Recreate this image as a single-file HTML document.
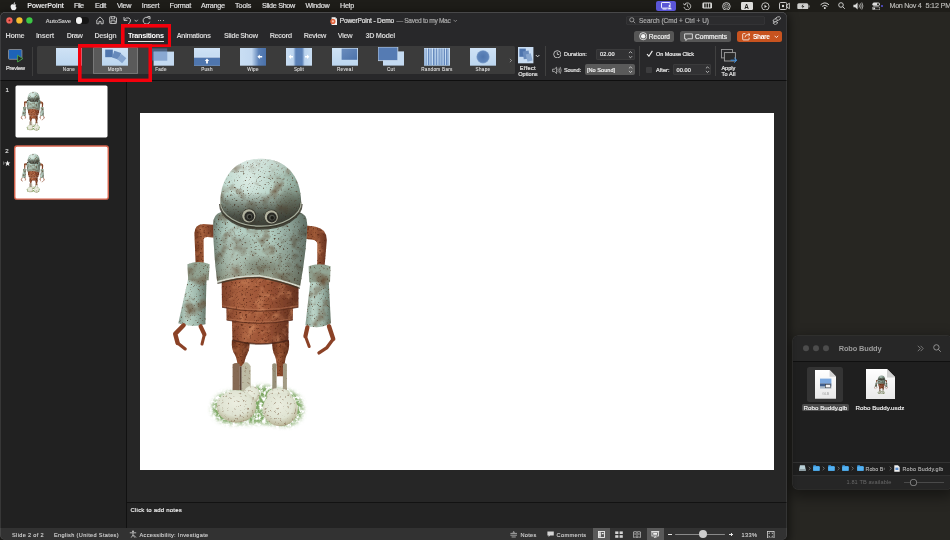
<!DOCTYPE html>
<html lang="en"><head><meta charset="utf-8"><title>PowerPoint - Demo</title>
<style>
html,body{margin:0;padding:0}
body{width:950px;height:540px;overflow:hidden;position:relative;background:#272622;font-family:"Liberation Sans",sans-serif;}
#root{position:absolute;left:0;top:0;width:950px;height:540px;will-change:transform;overflow:hidden}
.a{position:absolute;display:block}
.t{position:absolute;white-space:nowrap;display:block}
</style></head><body><div id="root">
<div class="a" style="left:0.00px;top:0.00px;width:950.00px;height:12.00px;background:#1e1d19;"></div>
<span class="t" style="left:27.30px;top:1.22px;font-size:7.2px;line-height:9.36px;letter-spacing:-0.320px;font-weight:700;color:#e6e6e6;">PowerPoint</span>
<span class="t" style="left:74.00px;top:1.22px;font-size:7.2px;line-height:9.36px;letter-spacing:-0.500px;font-weight:400;color:#e6e6e6;-webkit-text-stroke:0.18px #e6e6e6;">File</span>
<span class="t" style="left:95.00px;top:1.22px;font-size:7.2px;line-height:9.36px;letter-spacing:-0.352px;font-weight:400;color:#e6e6e6;-webkit-text-stroke:0.18px #e6e6e6;">Edit</span>
<span class="t" style="left:117.00px;top:1.22px;font-size:7.2px;line-height:9.36px;letter-spacing:-0.369px;font-weight:400;color:#e6e6e6;-webkit-text-stroke:0.18px #e6e6e6;">View</span>
<span class="t" style="left:141.70px;top:1.22px;font-size:7.2px;line-height:9.36px;letter-spacing:-0.051px;font-weight:400;color:#e6e6e6;-webkit-text-stroke:0.18px #e6e6e6;">Insert</span>
<span class="t" style="left:169.50px;top:1.22px;font-size:7.2px;line-height:9.36px;letter-spacing:-0.217px;font-weight:400;color:#e6e6e6;-webkit-text-stroke:0.18px #e6e6e6;">Format</span>
<span class="t" style="left:200.90px;top:1.22px;font-size:7.2px;line-height:9.36px;letter-spacing:-0.231px;font-weight:400;color:#e6e6e6;-webkit-text-stroke:0.18px #e6e6e6;">Arrange</span>
<span class="t" style="left:235.00px;top:1.22px;font-size:7.2px;line-height:9.36px;letter-spacing:-0.082px;font-weight:400;color:#e6e6e6;-webkit-text-stroke:0.18px #e6e6e6;">Tools</span>
<span class="t" style="left:262.00px;top:1.22px;font-size:7.2px;line-height:9.36px;letter-spacing:-0.302px;font-weight:400;color:#e6e6e6;-webkit-text-stroke:0.18px #e6e6e6;">Slide Show</span>
<span class="t" style="left:305.40px;top:1.22px;font-size:7.2px;line-height:9.36px;letter-spacing:-0.268px;font-weight:400;color:#e6e6e6;-webkit-text-stroke:0.18px #e6e6e6;">Window</span>
<span class="t" style="left:340.00px;top:1.22px;font-size:7.2px;line-height:9.36px;letter-spacing:-0.202px;font-weight:400;color:#e6e6e6;-webkit-text-stroke:0.18px #e6e6e6;">Help</span>
<span class="t" style="left:889.50px;top:1.22px;font-size:7.2px;line-height:9.36px;letter-spacing:-0.313px;font-weight:400;color:#b9b9b6;-webkit-text-stroke:0.18px #b9b9b6;">Mon Nov 4</span>
<span class="t" style="left:925.50px;top:1.22px;font-size:7.2px;line-height:9.36px;letter-spacing:-0.188px;font-weight:400;color:#b9b9b6;-webkit-text-stroke:0.18px #b9b9b6;">5:12 PM</span>
<div class="a" style="left:793.3px;top:335.6px;width:158.4px;height:153.6px;background:#1f1f1f;border-radius:5px;box-shadow:0 0 0 .6px #3e3e3e,0 5px 14px 3px rgba(0,0,0,.42);overflow:hidden">
<div class="a" style="left:0.00px;top:0.00px;width:160.00px;height:25.20px;background:#272727;"></div>
<div class="a" style="left:0.00px;top:25.20px;width:160.00px;height:0.60px;background:#101010;"></div>
<div class="a" style="left:0.00px;top:126.00px;width:160.00px;height:0.60px;background:#333;"></div>
<div class="a" style="left:0.00px;top:139.60px;width:160.00px;height:14.40px;background:#262626;"></div>
<div class="a" style="left:0.00px;top:139.60px;width:160.00px;height:0.60px;background:#303030;"></div>
</div>
<div class="a" id="ppt" style="left:0;top:12px;width:787px;height:528px;background:#262626;border-radius:5px 5px 5px 5px;box-shadow:0 3px 10px 2px rgba(0,0,0,.55);overflow:hidden">
<div class="a" style="left:0.00px;top:0.00px;width:787.00px;height:67.50px;background:#28282a;"></div>
<div class="a" style="left:0.00px;top:67.50px;width:787.00px;height:1.00px;background:#0f0f0f;"></div>
<div class="a" style="left:0.00px;top:68.50px;width:126.00px;height:447.50px;background:#212121;"></div>
<div class="a" style="left:126.00px;top:68.50px;width:1.00px;height:447.50px;background:#111;"></div>
<div class="a" style="left:127.00px;top:68.50px;width:660.00px;height:421.50px;background:#262626;"></div>
<div class="a" style="left:127.00px;top:489.50px;width:660.00px;height:1.00px;background:#121212;"></div>
<div class="a" style="left:127.00px;top:490.50px;width:660.00px;height:25.50px;background:#232323;"></div>
<div class="a" style="left:0.00px;top:516.00px;width:787.00px;height:12.00px;background:#323232;"></div>
<div class="a" style="left:140.00px;top:101.00px;width:634.00px;height:357.00px;background:#ffffff;"></div>
<div class="a" style="left:0;top:0;width:787px;height:528px;border-radius:5px;box-shadow:inset 0 .8px 0 rgba(255,255,255,.2), inset .8px 0 0 rgba(255,255,255,.13), inset -.8px 0 0 rgba(255,255,255,.1)"></div>
</div>
<svg class="a" style="left:4.00px;top:15.00px;" width="32" height="11" viewBox="0 0 32 11"><circle cx="5.4" cy="5.4" r="3.15" fill="#f0635a"/><circle cx="5.4" cy="5.4" r=".9" fill="#8c1a10"/><circle cx="15.4" cy="5.4" r="3.15" fill="#f6bc30"/><circle cx="25.4" cy="5.4" r="3.15" fill="#3cc845"/></svg>
<span class="t" style="left:45.50px;top:17.50px;font-size:6px;line-height:7.80px;letter-spacing:-0.309px;font-weight:700;color:#c8c8c8;">AutoSave</span>
<div class="a" style="left:75.30px;top:17.20px;width:13.30px;height:6.80px;background:#151515;border-radius:3.4px"></div>
<div class="a" style="left:75.60px;top:17.30px;width:6.60px;height:6.60px;background:#f4f4f4;border-radius:50%"></div>
<span class="t" style="left:339.80px;top:17.01px;font-size:6.6px;line-height:8.58px;letter-spacing:-0.178px;font-weight:400;color:#e0e0e0;-webkit-text-stroke:0.2px #e0e0e0;">PowerPoint - Demo</span>
<span class="t" style="left:396.50px;top:17.01px;font-size:6.6px;line-height:8.58px;letter-spacing:-0.319px;font-weight:400;color:#a8a8a8;-webkit-text-stroke:0.2px #a8a8a8;">— Saved to my Mac</span>
<div class="a" style="left:625.80px;top:15.70px;width:139.20px;height:9.60px;background:#2c2c2e;border-radius:2.5px;box-shadow:inset 0 0 0 0.6px #3a3a3c"></div>
<span class="t" style="left:639.00px;top:17.07px;font-size:6.5px;line-height:8.45px;letter-spacing:-0.003px;font-weight:400;color:#a9a9a9;-webkit-text-stroke:0.2px #a9a9a9;">Search (Cmd + Ctrl + U)</span>
<span class="t" style="left:5.60px;top:30.66px;font-size:7.3px;line-height:9.49px;letter-spacing:-0.470px;font-weight:700;color:#dedede;opacity:.93">Home</span>
<span class="t" style="left:35.90px;top:30.66px;font-size:7.3px;line-height:9.49px;letter-spacing:-0.330px;font-weight:700;color:#dedede;opacity:.93">Insert</span>
<span class="t" style="left:66.70px;top:30.66px;font-size:7.3px;line-height:9.49px;letter-spacing:-0.538px;font-weight:700;color:#dedede;opacity:.93">Draw</span>
<span class="t" style="left:94.50px;top:30.66px;font-size:7.3px;line-height:9.49px;letter-spacing:-0.440px;font-weight:700;color:#dedede;opacity:.93">Design</span>
<span class="t" style="left:176.40px;top:30.66px;font-size:7.3px;line-height:9.49px;letter-spacing:-0.565px;font-weight:700;color:#dedede;opacity:.93">Animations</span>
<span class="t" style="left:223.90px;top:30.66px;font-size:7.3px;line-height:9.49px;letter-spacing:-0.514px;font-weight:700;color:#dedede;opacity:.93">Slide Show</span>
<span class="t" style="left:269.80px;top:30.66px;font-size:7.3px;line-height:9.49px;letter-spacing:-0.525px;font-weight:700;color:#dedede;opacity:.93">Record</span>
<span class="t" style="left:303.70px;top:30.66px;font-size:7.3px;line-height:9.49px;letter-spacing:-0.493px;font-weight:700;color:#dedede;opacity:.93">Review</span>
<span class="t" style="left:337.80px;top:30.66px;font-size:7.3px;line-height:9.49px;letter-spacing:-0.526px;font-weight:700;color:#dedede;opacity:.93">View</span>
<span class="t" style="left:365.60px;top:30.66px;font-size:7.3px;line-height:9.49px;letter-spacing:-0.393px;font-weight:700;color:#dedede;opacity:.93">3D Model</span>
<span class="t" style="left:128.00px;top:30.66px;font-size:7.3px;line-height:9.49px;letter-spacing:-0.295px;font-weight:700;color:#ffffff;">Transitions</span>
<div class="a" style="left:128.00px;top:41.20px;width:36.00px;height:1.00px;background:#e8e8e8;"></div>
<div class="a" style="left:634.00px;top:30.80px;width:40.00px;height:11.20px;background:#565656;border-radius:2.5px"></div>
<span class="t" style="left:648.80px;top:32.91px;font-size:6.6px;line-height:8.58px;letter-spacing:-0.013px;font-weight:400;color:#f2f2f2;-webkit-text-stroke:0.2px #f2f2f2;">Record</span>
<div class="a" style="left:679.60px;top:30.80px;width:51.90px;height:11.20px;background:#565656;border-radius:2.5px"></div>
<span class="t" style="left:695.00px;top:32.91px;font-size:6.6px;line-height:8.58px;letter-spacing:0.012px;font-weight:400;color:#f2f2f2;-webkit-text-stroke:0.2px #f2f2f2;">Comments</span>
<div class="a" style="left:737.00px;top:30.80px;width:44.50px;height:11.20px;background:#c8531f;border-radius:2.5px"></div>
<span class="t" style="left:753.00px;top:32.91px;font-size:6.6px;line-height:8.58px;letter-spacing:-0.349px;font-weight:700;color:#ffffff;">Share</span>
<div class="a" style="left:37.00px;top:46.20px;width:478.00px;height:28.30px;background:#3b3b3b;border-radius:1.5px"></div>
<span class="t" style="left:6.00px;top:65.36px;font-size:5.6px;line-height:7.28px;letter-spacing:-0.131px;font-weight:400;color:#e4e4e4;-webkit-text-stroke:0.2px #e4e4e4;">Preview</span>
<div class="a" style="left:92.50px;top:47.00px;width:45.50px;height:27.00px;background:#5a5a5a;border-radius:1.5px;box-shadow:inset 0 0 0 0.6px #8e8e8e"></div>
<span class="t" style="left:62.84px;top:66.51px;font-size:4.6px;line-height:5.98px;letter-spacing:0.330px;font-weight:400;color:#dadada;-webkit-text-stroke:0.12px #dadada;">None</span>
<span class="t" style="left:107.70px;top:66.51px;font-size:4.6px;line-height:5.98px;letter-spacing:0.313px;font-weight:400;color:#dadada;-webkit-text-stroke:0.12px #dadada;">Morph</span>
<span class="t" style="left:155.13px;top:66.51px;font-size:4.6px;line-height:5.98px;letter-spacing:0.315px;font-weight:400;color:#dadada;-webkit-text-stroke:0.12px #dadada;">Fade</span>
<span class="t" style="left:201.13px;top:66.51px;font-size:4.6px;line-height:5.98px;letter-spacing:0.315px;font-weight:400;color:#dadada;-webkit-text-stroke:0.12px #dadada;">Push</span>
<span class="t" style="left:247.13px;top:66.51px;font-size:4.6px;line-height:5.98px;letter-spacing:0.314px;font-weight:400;color:#dadada;-webkit-text-stroke:0.12px #dadada;">Wipe</span>
<span class="t" style="left:293.99px;top:66.51px;font-size:4.6px;line-height:5.98px;letter-spacing:0.215px;font-weight:400;color:#dadada;-webkit-text-stroke:0.12px #dadada;">Split</span>
<span class="t" style="left:336.98px;top:66.51px;font-size:4.6px;line-height:5.98px;letter-spacing:0.286px;font-weight:400;color:#dadada;-webkit-text-stroke:0.12px #dadada;">Reveal</span>
<span class="t" style="left:386.99px;top:66.51px;font-size:4.6px;line-height:5.98px;letter-spacing:0.286px;font-weight:400;color:#dadada;-webkit-text-stroke:0.12px #dadada;">Cut</span>
<span class="t" style="left:421.25px;top:66.51px;font-size:4.6px;line-height:5.98px;letter-spacing:0.307px;font-weight:400;color:#dadada;-webkit-text-stroke:0.12px #dadada;">Random Bars</span>
<span class="t" style="left:475.55px;top:66.51px;font-size:4.6px;line-height:5.98px;letter-spacing:0.319px;font-weight:400;color:#dadada;-webkit-text-stroke:0.12px #dadada;">Shape</span>
<svg width="0" height="0" style="position:absolute"><defs>
<linearGradient id="lb" x1="0" y1="0" x2="0" y2="1"><stop offset="0" stop-color="#cfe2f5"/><stop offset="1" stop-color="#bcd6ef"/></linearGradient>
<linearGradient id="db" x1="0" y1="0" x2="1" y2="1"><stop offset="0" stop-color="#6a8cbd"/><stop offset="1" stop-color="#4d73ab"/></linearGradient>
<linearGradient id="wipe" x1="0" y1="0" x2="1" y2="0"><stop offset="0" stop-color="#c9def3"/><stop offset=".45" stop-color="#c2d8f0"/><stop offset=".72" stop-color="#5a80b6"/><stop offset="1" stop-color="#4a71aa"/></linearGradient>
<linearGradient id="split" x1="0" y1="0" x2="1" y2="0"><stop offset="0" stop-color="#c9def3"/><stop offset=".28" stop-color="#bcd4ee"/><stop offset=".38" stop-color="#5a80b6"/><stop offset=".62" stop-color="#5a80b6"/><stop offset=".72" stop-color="#bcd4ee"/><stop offset="1" stop-color="#c9def3"/></linearGradient>
<radialGradient id="shp"><stop offset="0" stop-color="#4f76ae"/><stop offset=".8" stop-color="#5f85ba"/><stop offset="1" stop-color="#86a6d0"/></radialGradient>
</defs></svg>
<svg class="a" style="left:56.00px;top:48.00px;" width="26" height="17.7" viewBox="0 0 26 17.7"><rect width="26" height="17.7" fill="url(#lb)"/></svg>
<svg class="a" style="left:102.00px;top:48.00px;" width="26" height="17.7" viewBox="0 0 26 17.7"><rect width="26" height="17.7" fill="url(#lb)"/><rect x="3.2" y="1.6" width="7.6" height="7.6" fill="#4f75ad"/><rect x="11" y="3.6" width="7.2" height="7.2" fill="#6689bb" transform="rotate(18 14.6 7.2)"/><rect x="16.4" y="7.4" width="6.6" height="6.6" fill="#86a5cf" transform="rotate(40 19.7 10.7)"/></svg>
<svg class="a" style="left:151.40px;top:48.00px;" width="24" height="17.7" viewBox="0 0 24 17.7"><rect x="2.6" y="3.6" width="20.4" height="14.1" fill="#c4daf1"/><rect x="0" y="0.4" width="16.2" height="12.2" fill="#5d82b8" opacity=".55"/><rect x="2.6" y="3.6" width="13.6" height="9" fill="#88a8d2" opacity=".6"/></svg>
<svg class="a" style="left:194.00px;top:48.00px;" width="26" height="17.7" viewBox="0 0 26 17.7"><rect width="26" height="17.7" fill="url(#lb)"/><rect x="0" y="9.2" width="26" height="8.5" fill="#4f76ae"/><rect x="0" y="8.9" width="26" height=".6" fill="#e8f1fa"/><path d="M13 10.6 L15.2 13 H13.9 V15.4 H12.1 V13 H10.8 Z" fill="#fff"/></svg>
<svg class="a" style="left:240.00px;top:48.00px;" width="26" height="17.7" viewBox="0 0 26 17.7"><rect width="26" height="17.7" fill="url(#wipe)"/><path d="M17.4 8.8 L19.8 6.6 V8 H22.2 V9.6 H19.8 V11 Z" fill="#fff"/></svg>
<svg class="a" style="left:286.00px;top:48.00px;" width="26" height="17.7" viewBox="0 0 26 17.7"><rect width="26" height="17.7" fill="url(#split)"/><path d="M2.6 8.8 L5 6.6 V8 H7 V9.6 H5 V11 Z" fill="#fff"/><path d="M23.4 8.8 L21 6.6 V8 H19 V9.6 H21 V11 Z" fill="#fff"/></svg>
<svg class="a" style="left:332.00px;top:48.00px;" width="26" height="17.7" viewBox="0 0 26 17.7"><rect width="26" height="17.7" fill="url(#lb)"/><rect x="9.6" y="0.6" width="15.6" height="11.2" fill="url(#db)"/></svg>
<svg class="a" style="left:378.00px;top:47.40px;" width="26.4" height="18.6" viewBox="0 0 26.4 18.6"><rect x="5" y="4.4" width="21.4" height="14.2" fill="#c4daf1"/><rect x="0" y="0" width="19.8" height="13.6" fill="#557bb3"/><path d="M0 0 H19.8 V13.6 H0 Z" fill="none" stroke="#dbe8f6" stroke-width=".7"/></svg>
<svg class="a" style="left:424.00px;top:48.00px;" width="26" height="17.7" viewBox="0 0 26 17.7"><rect width="26" height="17.7" fill="url(#lb)"/><rect x="0.60" y="0.5" width="0.7" height="16.7" fill="#5b81b8"/><rect x="2.30" y="0.5" width="0.5" height="16.7" fill="#5b81b8"/><rect x="4.10" y="0.5" width="1.2" height="16.7" fill="#5b81b8"/><rect x="6.10" y="0.5" width="0.5" height="16.7" fill="#5b81b8"/><rect x="7.20" y="0.5" width="0.5" height="16.7" fill="#5b81b8"/><rect x="9.00" y="0.5" width="0.9" height="16.7" fill="#5b81b8"/><rect x="10.50" y="0.5" width="0.7" height="16.7" fill="#5b81b8"/><rect x="12.20" y="0.5" width="0.9" height="16.7" fill="#5b81b8"/><rect x="13.90" y="0.5" width="0.5" height="16.7" fill="#5b81b8"/><rect x="15.40" y="0.5" width="0.7" height="16.7" fill="#5b81b8"/><rect x="16.70" y="0.5" width="0.9" height="16.7" fill="#5b81b8"/><rect x="18.60" y="0.5" width="0.7" height="16.7" fill="#5b81b8"/><rect x="20.10" y="0.5" width="0.9" height="16.7" fill="#5b81b8"/><rect x="22.00" y="0.5" width="0.9" height="16.7" fill="#5b81b8"/><rect x="23.50" y="0.5" width="0.9" height="16.7" fill="#5b81b8"/></svg>
<svg class="a" style="left:470.00px;top:48.00px;" width="26" height="17.7" viewBox="0 0 26 17.7"><rect width="26" height="17.7" fill="url(#lb)"/><circle cx="13" cy="8.8" r="6.6" fill="url(#shp)"/></svg>
<svg class="a" style="left:509.20px;top:57.60px;" width="3.6" height="5" viewBox="0 0 5 7"><path d="M1.2 1.2 L3.6 3.5 L1.2 5.8" fill="none" stroke="#d8d8d8" stroke-width=".8"/></svg>
<svg class="a" style="left:8.40px;top:49.20px;" width="16" height="14.6" viewBox="0 0 16 14.6"><rect x=".5" y=".5" width="13.4" height="9.8" rx=".8" fill="#1e63b7" stroke="#8b8f94" stroke-width=".9"/><path d="M9.6 6.2 L14.8 9.6 L9.6 13 Z" fill="#2a2a2a" stroke="#4aa84a" stroke-width=".9" stroke-linejoin="round"/></svg>
<div class="a" style="left:31.60px;top:46.50px;width:0.60px;height:29.00px;background:#3d3d3d;"></div>
<svg class="a" style="left:517.60px;top:47.00px;" width="22" height="16.5" viewBox="0 0 22 16.5"><rect x="0" y="0" width="15.4" height="16.3" fill="#c8dcf2"/><rect x="1.4" y="1.6" width="6.4" height="8.2" fill="#4f75ad"/><rect x="5.2" y="4" width="6" height="8" fill="#6a8cbd" transform="rotate(-8 8 8)"/><rect x="8.4" y="6.8" width="5.2" height="7.4" fill="#8aa8d0" transform="rotate(-14 11 10)"/><path d="M17.8 8 L19.6 9.8 L21.4 8" fill="none" stroke="#e4e4e4" stroke-width=".9"/></svg>
<span class="t" style="left:519.80px;top:65.16px;font-size:5.6px;line-height:7.28px;letter-spacing:0.331px;font-weight:400;color:#e6e6e6;-webkit-text-stroke:0.2px #e6e6e6;">Effect</span>
<span class="t" style="left:518.20px;top:71.16px;font-size:5.6px;line-height:7.28px;letter-spacing:0.014px;font-weight:400;color:#e6e6e6;-webkit-text-stroke:0.2px #e6e6e6;">Options</span>
<div class="a" style="left:545.40px;top:45.50px;width:0.60px;height:30.30px;background:#404040;"></div>
<svg class="a" style="left:552.60px;top:49.60px;" width="8.6" height="8.6" viewBox="0 0 8.6 8.6"><circle cx="4.3" cy="4.3" r="3.6" fill="none" stroke="#dcdcdc" stroke-width=".8"/><path d="M4.3 2.2 V4.5 H6.2" fill="none" stroke="#dcdcdc" stroke-width=".8"/></svg>
<span class="t" style="left:563.90px;top:51.22px;font-size:5.5px;line-height:7.15px;letter-spacing:0.076px;font-weight:400;color:#e6e6e6;-webkit-text-stroke:0.2px #e6e6e6;">Duration:</span>
<div class="a" style="left:596.20px;top:48.50px;width:38.40px;height:11.40px;background:#323234;border-radius:2px;box-shadow:inset 0 0 0 .5px #444"></div>
<span class="t" style="left:600.00px;top:51.36px;font-size:5.6px;line-height:7.28px;letter-spacing:0.137px;font-weight:400;color:#f0f0f0;-webkit-text-stroke:0.2px #f0f0f0;">02.00</span>
<svg class="a" style="left:628.40px;top:49.60px;" width="5" height="9.4" viewBox="0 0 5 9.4"><path d="M.9 3.2 L2.5 1.6 L4.1 3.2 M.9 6.2 L2.5 7.8 L4.1 6.2" fill="none" stroke="#d2d2d2" stroke-width=".8"/></svg>
<svg class="a" style="left:552.20px;top:65.60px;" width="9.6" height="8.8" viewBox="0 0 9.6 8.8"><path d="M.6 3.2 H2.4 L4.6 1.2 V7.6 L2.4 5.6 H.6 Z" fill="none" stroke="#cfcfcf" stroke-width=".7" stroke-linejoin="round"/><path d="M5.8 2.8 Q6.8 4.4 5.8 6 M7 1.8 Q8.6 4.4 7 7 M8.2 .9 Q10.2 4.4 8.2 7.9" fill="none" stroke="#cfcfcf" stroke-width=".6"/></svg>
<span class="t" style="left:563.90px;top:67.42px;font-size:5.5px;line-height:7.15px;letter-spacing:-0.055px;font-weight:400;color:#e6e6e6;-webkit-text-stroke:0.2px #e6e6e6;">Sound:</span>
<div class="a" style="left:584.90px;top:64.40px;width:49.70px;height:10.90px;background:#5a5a5a;border-radius:2px"></div>
<span class="t" style="left:586.90px;top:67.16px;font-size:5.6px;line-height:7.28px;letter-spacing:0.028px;font-weight:400;color:#f0f0f0;-webkit-text-stroke:0.2px #f0f0f0;">[No Sound]</span>
<svg class="a" style="left:628.40px;top:65.20px;" width="5" height="9.4" viewBox="0 0 5 9.4"><path d="M.9 3.4 L2.5 1.8 L4.1 3.4 M.9 6 L2.5 7.6 L4.1 6" fill="none" stroke="#e0e0e0" stroke-width=".8"/></svg>
<div class="a" style="left:639.00px;top:45.50px;width:0.60px;height:30.30px;background:#404040;"></div>
<svg class="a" style="left:646.40px;top:49.80px;" width="7.4" height="7.4" viewBox="0 0 7.4 7.4"><path d="M1 4 L2.9 6.2 L6.4 .9" fill="none" stroke="#f4f4f4" stroke-width="1.1"/></svg>
<span class="t" style="left:656.00px;top:51.22px;font-size:5.5px;line-height:7.15px;letter-spacing:-0.058px;font-weight:400;color:#eaeaea;-webkit-text-stroke:0.2px #eaeaea;">On Mouse Click</span>
<div class="a" style="left:646.00px;top:67.00px;width:6.40px;height:6.20px;background:#3c3c3e;border-radius:1px"></div>
<span class="t" style="left:656.00px;top:67.42px;font-size:5.5px;line-height:7.15px;letter-spacing:0.059px;font-weight:400;color:#eaeaea;-webkit-text-stroke:0.2px #eaeaea;">After:</span>
<div class="a" style="left:673.30px;top:64.40px;width:37.90px;height:10.90px;background:#323234;border-radius:2px;box-shadow:inset 0 0 0 .5px #444"></div>
<span class="t" style="left:676.60px;top:67.36px;font-size:5.6px;line-height:7.28px;letter-spacing:0.077px;font-weight:400;color:#f0f0f0;-webkit-text-stroke:0.2px #f0f0f0;">00.00</span>
<svg class="a" style="left:705.00px;top:65.20px;" width="5" height="9.4" viewBox="0 0 5 9.4"><path d="M.9 3.4 L2.5 1.8 L4.1 3.4 M.9 6 L2.5 7.6 L4.1 6" fill="none" stroke="#d2d2d2" stroke-width=".8"/></svg>
<div class="a" style="left:715.30px;top:45.50px;width:0.60px;height:30.30px;background:#404040;"></div>
<svg class="a" style="left:721.00px;top:48.60px;" width="16.4" height="15" viewBox="0 0 16.4 15"><rect x=".5" y=".5" width="11" height="8.4" fill="none" stroke="#9a9a9a" stroke-width=".9"/><rect x="3.4" y="3.6" width="11" height="8.4" fill="#2a2a2a" stroke="#a4a4a4" stroke-width=".9"/><path d="M9.6 11.2 H15.6 M13.2 8.8 L15.8 11.2 L13.2 13.6" fill="none" stroke="#3b8fe0" stroke-width="1"/></svg>
<span class="t" style="left:721.40px;top:65.36px;font-size:5.6px;line-height:7.28px;letter-spacing:-0.022px;font-weight:400;color:#e6e6e6;-webkit-text-stroke:0.2px #e6e6e6;">Apply</span>
<span class="t" style="left:721.60px;top:71.16px;font-size:5.6px;line-height:7.28px;letter-spacing:0.103px;font-weight:400;color:#e6e6e6;-webkit-text-stroke:0.2px #e6e6e6;">To All</span>
<svg class="a" style="left:95.60px;top:16.20px;" width="8" height="8.6" viewBox="0 0 8 8.6"><path d="M.8 4 L4 .9 L7.2 4 V7.8 H5 V5.4 H3 V7.8 H.8 Z" fill="none" stroke="#d6d6d6" stroke-width=".85" stroke-linejoin="round"/></svg>
<svg class="a" style="left:108.80px;top:16.40px;" width="8.2" height="8.2" viewBox="0 0 8.2 8.2"><path d="M.7 1.4 Q.7 .7 1.4 .7 H6.2 L7.5 2 V6.8 Q7.5 7.5 6.8 7.5 H1.4 Q.7 7.5 .7 6.8 Z" fill="none" stroke="#d6d6d6" stroke-width=".85"/><path d="M2.3 .8 V2.9 H5.6 V.8 M2 7.4 V4.8 H6.2 V7.4" fill="none" stroke="#d6d6d6" stroke-width=".8"/></svg>
<svg class="a" style="left:122.60px;top:16.00px;" width="9" height="9" viewBox="0 0 9 9"><path d="M1 1 V4.4 H4.4" fill="none" stroke="#d6d6d6" stroke-width=".9"/><path d="M1.2 4.2 Q3.2 .9 6 2 Q8.6 3.4 7 6.2 L5 8.4" fill="none" stroke="#d6d6d6" stroke-width=".9"/></svg>
<svg class="a" style="left:134.40px;top:19.20px;" width="4.4" height="3.4" viewBox="0 0 4.4 3.4"><path d="M.6 .8 L2.2 2.5 L3.8 .8" fill="none" stroke="#d6d6d6" stroke-width=".8"/></svg>
<svg class="a" style="left:141.80px;top:16.20px;" width="9" height="9" viewBox="0 0 9 9"><path d="M7.6 3.2 A3.4 3.4 0 1 0 7.8 5.6" fill="none" stroke="#d6d6d6" stroke-width=".9"/><path d="M5.4 .6 H8 V3.2" fill="none" stroke="#d6d6d6" stroke-width=".9"/></svg>
<div class="a" style="left:157.65px;top:20.20px;width:1.10px;height:1.10px;background:#d6d6d6;border-radius:50%"></div>
<div class="a" style="left:160.25px;top:20.20px;width:1.10px;height:1.10px;background:#d6d6d6;border-radius:50%"></div>
<div class="a" style="left:162.85px;top:20.20px;width:1.10px;height:1.10px;background:#d6d6d6;border-radius:50%"></div>
<svg class="a" style="left:329.80px;top:16.60px;" width="7.4" height="8.2" viewBox="0 0 7.4 8.2"><path d="M1.6 .3 H5.2 L7.1 2.2 V7.9 H1.6 Z" fill="#f3f3f3"/><path d="M5.2 .3 L7.1 2.2 H5.2 Z" fill="#c9c9c9"/><circle cx="2.9" cy="4.4" r="2.6" fill="#e2623a"/><circle cx="2.9" cy="4.4" r="1.1" fill="#f7c4b2"/></svg>
<svg class="a" style="left:452.60px;top:19.00px;" width="4.6" height="3.6" viewBox="0 0 4.6 3.6"><path d="M.6 .9 L2.3 2.6 L4 .9" fill="none" stroke="#a8a8a8" stroke-width=".7"/></svg>
<svg class="a" style="left:628.80px;top:17.00px;" width="6.8" height="6.8" viewBox="0 0 6.8 6.8"><circle cx="2.8" cy="2.8" r="2.1" fill="none" stroke="#a9a9a9" stroke-width=".8"/><path d="M4.3 4.3 L6.2 6.2" stroke="#a9a9a9" stroke-width=".8"/></svg>
<svg class="a" style="left:771.60px;top:15.60px;" width="9.6" height="9.6" viewBox="0 0 9.6 9.6"><ellipse cx="6" cy="2.6" rx="2.6" ry="1.7" fill="none" stroke="#cfcfcf" stroke-width=".75" transform="rotate(-20 6 2.6)"/><ellipse cx="3.2" cy="4.4" rx="2.2" ry="1.4" fill="#28282a" stroke="#cfcfcf" stroke-width=".75" transform="rotate(-20 3.2 4.4)"/><path d="M.9 7 L3.4 8.8 L6 6.6 L3.6 5.6 Z" fill="none" stroke="#cfcfcf" stroke-width=".75" stroke-linejoin="round"/></svg>
<svg class="a" style="left:638.60px;top:32.30px;" width="8.4" height="8.4" viewBox="0 0 8.4 8.4"><circle cx="4.2" cy="4.2" r="3.6" fill="none" stroke="#f2f2f2" stroke-width=".8"/><circle cx="4.2" cy="4.2" r="2.2" fill="#f2f2f2"/></svg>
<svg class="a" style="left:684.00px;top:32.60px;" width="9" height="8.4" viewBox="0 0 9 8.4"><path d="M.6 .9 H8.4 V5.8 H3.6 L1.9 7.6 V5.8 H.6 Z" fill="none" stroke="#f2f2f2" stroke-width=".8" stroke-linejoin="round"/></svg>
<svg class="a" style="left:741.60px;top:32.20px;" width="8.6" height="8.6" viewBox="0 0 8.6 8.6"><path d="M3.4 1.6 H1.4 Q.7 1.6 .7 2.3 V7.2 Q.7 7.9 1.4 7.9 H6.4 Q7.1 7.9 7.1 7.2 V5.6" fill="none" stroke="#fff" stroke-width=".8"/><path d="M3 5.4 Q3.2 2.6 6 2.6 H8 M6.4 .8 L8.1 2.6 L6.4 4.4" fill="none" stroke="#fff" stroke-width=".8"/></svg>
<svg class="a" style="left:773.80px;top:34.80px;" width="4.8" height="3.6" viewBox="0 0 4.8 3.6"><path d="M.6 .8 L2.4 2.6 L4.2 .8" fill="none" stroke="#fff" stroke-width=".8"/></svg>
<svg class="a" style="left:10.10px;top:1.50px;" width="7.2" height="9" viewBox="0 0 6.2 7.8"><path d="M3.1 2.2 C2.4 1.7 1.6 1.8 1 2.4 C.2 3.3 .4 5 1.2 6.2 C1.7 7 2.3 7.3 3.1 6.9 C3.9 7.3 4.5 7 5 6.2 C5.3 5.8 5.5 5.4 5.7 4.9 C4.6 4.4 4.6 2.9 5.5 2.4 C4.9 1.7 3.9 1.7 3.1 2.2 Z" fill="#ededed"/><path d="M3.1 1.9 C3.1 1.1 3.7 .4 4.4 .3 C4.5 1.1 3.9 1.8 3.1 1.9 Z" fill="#ededed"/></svg>
<div class="a" style="left:656.40px;top:0.60px;width:19.60px;height:10.60px;background:#5a55d6;border-radius:2px"></div>
<svg class="a" style="left:661.00px;top:2.20px;" width="11" height="7.6" viewBox="0 0 11 7.6"><rect x=".5" y=".5" width="8.6" height="5.6" rx=".6" fill="none" stroke="#fff" stroke-width=".9"/><rect x="1.6" y="6.6" width="4" height=".9" fill="#fff"/><circle cx="8.6" cy="4" r="1.3" fill="#fff" stroke="#5a55d6" stroke-width=".5"/><path d="M6.4 7.6 Q6.4 5.6 8.6 5.6 Q10.8 5.6 10.8 7.6 Z" fill="#fff" stroke="#5a55d6" stroke-width=".4"/></svg>
<svg class="a" style="left:683.40px;top:1.80px;" width="8.4" height="8.4" viewBox="0 0 8.4 8.4"><path d="M1.4 2.6 A3.4 3.4 0 1 1 1 5" fill="none" stroke="#dddddb" stroke-width=".8"/><path d="M.3 1.4 L1.3 3 L3 2.4" fill="none" stroke="#dddddb" stroke-width=".7"/><path d="M4.4 2.4 V4.4 L5.8 5.4" fill="none" stroke="#dddddb" stroke-width=".8"/></svg>
<svg class="a" style="left:702.00px;top:2.40px;" width="10.4" height="7" viewBox="0 0 10.4 7"><rect x=".4" y=".4" width="9.6" height="6.2" rx="1.4" fill="#dddddb"/><rect x="2.2" y="1.5" width="1.5" height="4" fill="#1e1d19"/><rect x="4.5" y="1.5" width="1.5" height="4" fill="#1e1d19"/><rect x="6.8" y="1.5" width="1.5" height="4" fill="#1e1d19"/></svg>
<svg class="a" style="left:722.20px;top:1.60px;" width="8.8" height="8.8" viewBox="0 0 8.8 8.8"><circle cx="4.4" cy="4.4" r="3.8" fill="none" stroke="#dddddb" stroke-width=".85"/><circle cx="4.4" cy="4.4" r="2.3" fill="none" stroke="#dddddb" stroke-width=".6"/><path d="M3.8 3.4 V5.4 M5 3.4 V5.4" stroke="#dddddb" stroke-width=".6"/></svg>
<div class="a" style="left:741.00px;top:1.80px;width:11.60px;height:8.40px;background:#dddddb;border-radius:1.2px"></div>
<span class="t" style="left:744.20px;top:2.64px;font-size:6.4px;line-height:8.32px;letter-spacing:0.578px;font-weight:700;color:#1e1d19;">A</span>
<svg class="a" style="left:761.40px;top:1.60px;" width="8.8" height="8.8" viewBox="0 0 8.8 8.8"><circle cx="4.4" cy="4.4" r="3.7" fill="none" stroke="#dddddb" stroke-width=".85"/><path d="M3.5 2.8 L6 4.4 L3.5 6 Z" fill="#dddddb"/></svg>
<svg class="a" style="left:778.60px;top:2.00px;" width="11" height="8" viewBox="0 0 11 8"><rect x=".5" y=".5" width="7.2" height="7" rx="1.2" fill="none" stroke="#dddddb" stroke-width=".9"/><circle cx="4" cy="4" r="1.2" fill="#dddddb"/><path d="M7.8 3 L10.4 1.2 V6.8 L7.8 5 Z" fill="none" stroke="#dddddb" stroke-width=".8" stroke-linejoin="round"/></svg>
<svg class="a" style="left:797.00px;top:2.60px;" width="13" height="6.6" viewBox="0 0 13 6.6"><rect x=".3" y=".3" width="11" height="6" rx="1.5" fill="#dddddb" opacity=".92"/><rect x="11.6" y="2.2" width="1" height="2.2" rx=".4" fill="#dddddb" opacity=".7"/><path d="M6.4 .9 L4.2 3.6 H5.8 L5 5.8 L7.4 2.9 H5.8 Z" fill="#1e1d19"/></svg>
<svg class="a" style="left:819.60px;top:2.00px;" width="9.6" height="7.4" viewBox="0 0 9.6 7.4"><path d="M.6 2.8 Q4.8 -1 9 2.8" fill="none" stroke="#dddddb" stroke-width="1"/><path d="M2.2 4.4 Q4.8 2.2 7.4 4.4" fill="none" stroke="#dddddb" stroke-width="1"/><circle cx="4.8" cy="6.1" r="1" fill="#dddddb"/></svg>
<svg class="a" style="left:837.60px;top:2.00px;" width="7.4" height="7.4" viewBox="0 0 7.4 7.4"><circle cx="3" cy="3" r="2.3" fill="none" stroke="#dddddb" stroke-width=".9"/><path d="M4.7 4.7 L6.8 6.8" stroke="#dddddb" stroke-width=".9"/></svg>
<svg class="a" style="left:853.40px;top:1.80px;" width="11" height="8" viewBox="0 0 11 8"><path d="M.4 2.8 H2.2 L4.6 .6 V7.4 L2.2 5.2 H.4 Z" fill="#dddddb"/><path d="M6 2.4 Q7 4 6 5.6 M7.4 1.4 Q9 4 7.4 6.6 M8.8 .5 Q11 4 8.8 7.5" fill="none" stroke="#dddddb" stroke-width=".7"/></svg>
<svg class="a" style="left:871.60px;top:1.80px;" width="8.4" height="8.4" viewBox="0 0 8.4 8.4"><rect x=".4" y=".6" width="7.6" height="3.2" rx="1.6" fill="#dddddb"/><circle cx="6" cy="2.2" r="1" fill="#1e1d19"/><rect x=".4" y="4.8" width="7.6" height="3.2" rx="1.6" fill="none" stroke="#dddddb" stroke-width=".7"/><circle cx="2.2" cy="6.4" r="1" fill="#dddddb"/></svg>
<div class="a" style="left:881.40px;top:4.60px;width:2.00px;height:2.00px;background:#5b55e0;border-radius:50%"></div>
<span class="t" style="left:5.60px;top:86.70px;font-size:6px;line-height:7.80px;letter-spacing:-0.737px;font-weight:400;color:#e0e0e0;-webkit-text-stroke:0.15px #e0e0e0;">1</span>
<svg class="a" style="left:14.00px;top:84.00px;" width="96" height="56" viewBox="0 0 96 56"><rect x="1.5" y="1.4" width="92" height="52" rx="1.6" fill="#fff"/></svg>
<span class="t" style="left:5.20px;top:147.50px;font-size:6px;line-height:7.80px;letter-spacing:0.063px;font-weight:400;color:#e0e0e0;-webkit-text-stroke:0.15px #e0e0e0;">2</span>
<svg class="a" style="left:13.00px;top:144.00px;" width="98" height="58" viewBox="0 0 98 58"><rect x="1.75" y="1.95" width="93.5" height="53.2" rx="2.2" fill="#fff" stroke="#d8634c" stroke-width="1.4"/></svg>
<svg class="a" style="left:3.20px;top:159.60px;" width="7.6" height="6.4" viewBox="0 0 7.6 6.4"><path d="M.3 1.4 V5 M1.1 2.2 V4.2" stroke="#bdbdbd" stroke-width=".45"/><path d="M4.6 .4 L5.4 2.4 L7.4 2.5 L5.8 3.8 L6.4 5.9 L4.6 4.7 L2.8 5.9 L3.4 3.8 L1.8 2.5 L3.8 2.4 Z" fill="#f2f2f2"/></svg>
<span class="t" style="left:130.50px;top:507.30px;font-size:6px;line-height:7.80px;letter-spacing:0.212px;font-weight:400;color:#f4f4f4;-webkit-text-stroke:0.15px #f4f4f4;">Click to add notes</span>
<span class="t" style="left:12.00px;top:531.56px;font-size:5.6px;line-height:7.28px;letter-spacing:0.332px;font-weight:400;color:#d4d4d4;-webkit-text-stroke:0.12px #d4d4d4;">Slide 2 of 2</span>
<span class="t" style="left:54.00px;top:531.56px;font-size:5.6px;line-height:7.28px;letter-spacing:0.336px;font-weight:400;color:#d4d4d4;-webkit-text-stroke:0.12px #d4d4d4;">English (United States)</span>
<svg class="a" style="left:128.60px;top:530.40px;" width="8" height="8" viewBox="0 0 8 8"><circle cx="4" cy="1.3" r=".9" fill="#d4d4d4"/><path d="M.8 2.8 H7.2 M4 2.8 V5 M4 5 L2.2 7.6 M4 5 L5.8 7.6" fill="none" stroke="#d4d4d4" stroke-width=".8"/><path d="M5 5.4 L7.4 7.6" stroke="#d4d4d4" stroke-width=".6"/></svg>
<span class="t" style="left:139.50px;top:531.56px;font-size:5.6px;line-height:7.28px;letter-spacing:0.320px;font-weight:400;color:#d4d4d4;-webkit-text-stroke:0.12px #d4d4d4;">Accessibility: Investigate</span>
<svg class="a" style="left:510.00px;top:531.00px;" width="7.4" height="6.6" viewBox="0 0 7.4 6.6"><path d="M.4 2.4 H7 M.4 4.2 H7 M1.6 6 H5.8" stroke="#d4d4d4" stroke-width=".7"/><path d="M3.7 .2 L5 1.6 H2.4 Z" fill="#d4d4d4"/></svg>
<span class="t" style="left:520.50px;top:531.56px;font-size:5.6px;line-height:7.28px;letter-spacing:0.274px;font-weight:400;color:#d4d4d4;-webkit-text-stroke:0.12px #d4d4d4;">Notes</span>
<svg class="a" style="left:546.60px;top:531.20px;" width="7.2" height="6.4" viewBox="0 0 7.2 6.4"><path d="M.4 .5 H6.8 V4.4 H3 L1.6 5.9 V4.4 H.4 Z" fill="#d4d4d4"/></svg>
<span class="t" style="left:556.50px;top:531.56px;font-size:5.6px;line-height:7.28px;letter-spacing:0.366px;font-weight:400;color:#d4d4d4;-webkit-text-stroke:0.12px #d4d4d4;">Comments</span>
<div class="a" style="left:593.00px;top:528.40px;width:17.00px;height:11.60px;background:#5a5a5a;"></div>
<svg class="a" style="left:598.00px;top:531.00px;" width="7" height="7" viewBox="0 0 7 7"><rect x=".5" y=".5" width="6" height="6" fill="none" stroke="#f0f0f0" stroke-width=".9"/><rect x="1.2" y="1.2" width="1.6" height="4.6" fill="#f0f0f0"/><rect x="3.8" y="2" width="1.8" height="1.2" fill="#f0f0f0"/></svg>
<svg class="a" style="left:615.00px;top:530.80px;" width="8" height="7.2" viewBox="0 0 8 7.2"><rect x=".2" y=".4" width="3.2" height="2.6" fill="#d4d4d4"/><rect x="4.6" y=".4" width="3.2" height="2.6" fill="#d4d4d4"/><rect x=".2" y="4.2" width="3.2" height="2.6" fill="#d4d4d4"/><rect x="4.6" y="4.2" width="3.2" height="2.6" fill="#d4d4d4"/></svg>
<svg class="a" style="left:633.00px;top:530.80px;" width="8" height="7.2" viewBox="0 0 8 7.2"><path d="M.4 1 Q2.2 .2 4 1 Q5.8 .2 7.6 1 V6.4 Q5.8 5.6 4 6.4 Q2.2 5.6 .4 6.4 Z M4 1 V6.4" fill="none" stroke="#d4d4d4" stroke-width=".7"/><path d="M1.2 2.4 H3.2 M1.2 3.6 H3.2 M4.8 2.4 H6.8 M4.8 3.6 H6.8" stroke="#d4d4d4" stroke-width=".45"/></svg>
<div class="a" style="left:647.00px;top:528.40px;width:17.00px;height:11.60px;background:#5a5a5a;"></div>
<svg class="a" style="left:651.40px;top:530.60px;" width="8.4" height="7.6" viewBox="0 0 8.4 7.6"><path d="M.2 .6 H8.2" stroke="#f0f0f0" stroke-width=".9"/><rect x=".9" y="1" width="6.6" height="4" fill="none" stroke="#f0f0f0" stroke-width=".8"/><rect x="2.2" y="2" width="4" height="1.8" fill="#f0f0f0"/><path d="M4.2 5 V6.4 M2.6 7.2 L4.2 6 L5.8 7.2" fill="none" stroke="#f0f0f0" stroke-width=".7"/></svg>
<div class="a" style="left:668.40px;top:534.00px;width:3.40px;height:0.90px;background:#e8e8e8;"></div>
<div class="a" style="left:675.00px;top:533.70px;width:50.00px;height:1.60px;background:#8a8a8a;border-radius:1px"></div>
<div class="a" style="left:698.60px;top:530.40px;width:8.00px;height:8.00px;background:#cfcfcf;border-radius:50%"></div>
<div class="a" style="left:729.20px;top:534.00px;width:3.60px;height:0.90px;background:#e8e8e8;"></div>
<div class="a" style="left:730.55px;top:532.60px;width:0.90px;height:3.70px;background:#e8e8e8;"></div>
<span class="t" style="left:741.50px;top:531.56px;font-size:5.6px;line-height:7.28px;letter-spacing:0.419px;font-weight:400;color:#d4d4d4;-webkit-text-stroke:0.12px #d4d4d4;">133%</span>
<svg class="a" style="left:767.40px;top:530.60px;" width="7.6" height="7.6" viewBox="0 0 7.6 7.6"><rect x=".5" y=".5" width="6.6" height="6.6" fill="none" stroke="#d4d4d4" stroke-width=".8"/><path d="M2 3 V2 H3 M4.6 2 H5.6 V3 M5.6 4.6 V5.6 H4.6 M3 5.6 H2 V4.6" fill="none" stroke="#d4d4d4" stroke-width=".7"/></svg>
<svg class="a" style="left:800.00px;top:343.00px;" width="32" height="11" viewBox="0 0 32 11"><circle cx="6" cy="5.3" r="3" fill="#4c4c4c"/><circle cx="16" cy="5.3" r="3" fill="#4c4c4c"/><circle cx="26" cy="5.3" r="3" fill="#4c4c4c"/></svg>
<span class="t" style="left:838.70px;top:344.09px;font-size:7.4px;line-height:9.62px;letter-spacing:-0.118px;font-weight:700;color:#9b9b9b;">Robo Buddy</span>
<svg class="a" style="left:917.40px;top:345.00px;" width="7" height="7" viewBox="0 0 7 7"><path d="M.8 .8 L3.4 3.5 L.8 6.2 M3.6 .8 L6.2 3.5 L3.6 6.2" fill="none" stroke="#8c8c8c" stroke-width=".8"/></svg>
<svg class="a" style="left:932.60px;top:344.20px;" width="8.4" height="8.4" viewBox="0 0 8.4 8.4"><circle cx="3.4" cy="3.4" r="2.7" fill="none" stroke="#9a9a9a" stroke-width=".9"/><path d="M5.4 5.4 L7.8 7.8" stroke="#9a9a9a" stroke-width=".9"/></svg>
<div class="a" style="left:807.40px;top:366.70px;width:36.10px;height:35.30px;background:#343434;border-radius:2.5px"></div>
<svg class="a" style="left:814.80px;top:370.00px;" width="21.4" height="28.8" viewBox="0 0 21.4 28.8"><defs><linearGradient id="pg" x1="0" y1="0" x2="0" y2="1"><stop offset="0" stop-color="#ffffff"/><stop offset="1" stop-color="#e9e9e9"/></linearGradient></defs><path d="M0 0 H14.6 L21.4 6.8 V28.8 H0 Z" fill="url(#pg)"/><path d="M14.6 0 L21.4 6.8 H14.6 Z" fill="#d2d2d2"/><rect x="5" y="8.6" width="11.4" height="4.8" fill="#7aa7de"/><rect x="5" y="13.4" width="11.4" height="3.2" fill="#3f5f8e"/><rect x="5" y="16.6" width="11.4" height="2" fill="#a9b8c6"/><rect x="10.6" y="14.4" width="5" height="3.4" fill="#f4f4f4" stroke="#333" stroke-width=".5"/><text x="10.7" y="25.4" font-size="3.4" text-anchor="middle" fill="#9a9a9a" font-family="Liberation Sans, sans-serif">GLB</text></svg>
<div class="a" style="left:801.80px;top:403.70px;width:47.10px;height:7.70px;background:#4b4b4b;border-radius:1.6px"></div>
<span class="t" style="left:803.60px;top:404.07px;font-size:6.2px;line-height:8.06px;letter-spacing:0.010px;font-weight:400;color:#f4f4f4;-webkit-text-stroke:0.15px #f4f4f4;">Robo Buddy.glb</span>
<svg class="a" style="left:865.50px;top:369.00px;" width="29.6" height="30.4" viewBox="0 0 29.6 30.4"><path d="M0 0 H21 L29.6 8.6 V30.4 H0 Z" fill="url(#pg)"/><path d="M21 0 L29.6 8.6 H21 Z" fill="#d0d0d0"/></svg>
<span class="t" style="left:855.50px;top:404.07px;font-size:6.2px;line-height:8.06px;letter-spacing:0.028px;font-weight:400;color:#f4f4f4;-webkit-text-stroke:0.15px #f4f4f4;">Robo Buddy.usdz</span>
<svg class="a" style="left:799.40px;top:465.20px;" width="6.8" height="6.4" viewBox="0 0 6.8 6.4"><path d="M1 .3 H5.8 L6.6 4 V6 H.2 V4 Z" fill="#b9cfd6"/><rect x=".2" y="4" width="6.4" height="2" fill="#8fa0a6"/></svg>
<svg class="a" style="left:807.80px;top:466.20px;" width="3.2" height="4.8" viewBox="0 0 3.2 4.8"><path d="M.7 .7 L2.4 2.4 L.7 4.1" fill="none" stroke="#a0a0a0" stroke-width=".6"/></svg>
<svg class="a" style="left:813.40px;top:465.40px;" width="6.8" height="6" viewBox="0 0 6.8 6"><path d="M.2 .8 Q.2 .3 .7 .3 H2.6 L3.3 1 H6.1 Q6.6 1 6.6 1.5 V5.2 Q6.6 5.7 6.1 5.7 H.7 Q.2 5.7 .2 5.2 Z" fill="#3f9be0"/><rect x=".2" y="1.7" width="6.4" height="4" rx=".5" fill="#54b1f0"/></svg>
<svg class="a" style="left:822.20px;top:466.20px;" width="3.2" height="4.8" viewBox="0 0 3.2 4.8"><path d="M.7 .7 L2.4 2.4 L.7 4.1" fill="none" stroke="#a0a0a0" stroke-width=".6"/></svg>
<svg class="a" style="left:828.00px;top:465.40px;" width="6.8" height="6" viewBox="0 0 6.8 6"><path d="M.2 .8 Q.2 .3 .7 .3 H2.6 L3.3 1 H6.1 Q6.6 1 6.6 1.5 V5.2 Q6.6 5.7 6.1 5.7 H.7 Q.2 5.7 .2 5.2 Z" fill="#3f9be0"/><rect x=".2" y="1.7" width="6.4" height="4" rx=".5" fill="#54b1f0"/></svg>
<svg class="a" style="left:836.80px;top:466.20px;" width="3.2" height="4.8" viewBox="0 0 3.2 4.8"><path d="M.7 .7 L2.4 2.4 L.7 4.1" fill="none" stroke="#a0a0a0" stroke-width=".6"/></svg>
<svg class="a" style="left:842.40px;top:465.40px;" width="6.8" height="6" viewBox="0 0 6.8 6"><path d="M.2 .8 Q.2 .3 .7 .3 H2.6 L3.3 1 H6.1 Q6.6 1 6.6 1.5 V5.2 Q6.6 5.7 6.1 5.7 H.7 Q.2 5.7 .2 5.2 Z" fill="#3f9be0"/><rect x=".2" y="1.7" width="6.4" height="4" rx=".5" fill="#54b1f0"/></svg>
<svg class="a" style="left:851.20px;top:466.20px;" width="3.2" height="4.8" viewBox="0 0 3.2 4.8"><path d="M.7 .7 L2.4 2.4 L.7 4.1" fill="none" stroke="#a0a0a0" stroke-width=".6"/></svg>
<svg class="a" style="left:857.20px;top:465.40px;" width="6.8" height="6" viewBox="0 0 6.8 6"><path d="M.2 .8 Q.2 .3 .7 .3 H2.6 L3.3 1 H6.1 Q6.6 1 6.6 1.5 V5.2 Q6.6 5.7 6.1 5.7 H.7 Q.2 5.7 .2 5.2 Z" fill="#3f9be0"/><rect x=".2" y="1.7" width="6.4" height="4" rx=".5" fill="#54b1f0"/></svg>
<span class="t" style="left:865.60px;top:465.69px;font-size:5.4px;line-height:7.02px;letter-spacing:-0.069px;font-weight:400;color:#b4b4b4;-webkit-text-stroke:0.1px #b4b4b4;">Robo B</span>
<span class="t" style="left:883.40px;top:465.49px;font-size:5.4px;line-height:7.02px;letter-spacing:-0.198px;font-weight:400;color:#888;">‹</span>
<svg class="a" style="left:888.60px;top:466.20px;" width="3.2" height="4.8" viewBox="0 0 3.2 4.8"><path d="M.7 .7 L2.4 2.4 L.7 4.1" fill="none" stroke="#a0a0a0" stroke-width=".6"/></svg>
<svg class="a" style="left:894.00px;top:465.00px;" width="6" height="7" viewBox="0 0 6 7"><path d="M.3 .2 H3.9 L5.7 2 V6.8 H.3 Z" fill="#f1f1f1"/><rect x="1.4" y="2.6" width="3" height="2.4" fill="#5b8fd0"/></svg>
<span class="t" style="left:902.50px;top:465.69px;font-size:5.4px;line-height:7.02px;letter-spacing:0.212px;font-weight:400;color:#b4b4b4;-webkit-text-stroke:0.1px #b4b4b4;">Robo Buddy.glb</span>
<span class="t" style="left:846.50px;top:479.36px;font-size:5.6px;line-height:7.28px;letter-spacing:0.108px;font-weight:400;color:#686868;">1.81 TB available</span>
<div class="a" style="left:904.00px;top:482.40px;width:39.50px;height:0.80px;background:#4a4a4a;"></div>
<div class="a" style="left:910.00px;top:478.90px;width:7.40px;height:7.40px;background:#252525;border-radius:50%;box-shadow:inset 0 0 0 .8px #8a8a8a"></div>
<svg class="a" style="left:139.4px;top:112.7px" width="634.6" height="357.6" viewBox="139.4 112.7 634.6 357.6"><defs>
<radialGradient id="dome" cx=".34" cy=".3" r=".8"><stop offset="0" stop-color="#dcece5"/><stop offset=".4" stop-color="#bcd6cb"/><stop offset=".72" stop-color="#93ad9f"/><stop offset="1" stop-color="#5c6a5e"/></radialGradient>
<linearGradient id="domesh" x1="0" y1="0" x2="0" y2="1"><stop offset="0" stop-color="#fff" stop-opacity=".35"/><stop offset=".25" stop-color="#fff" stop-opacity="0"/><stop offset=".48" stop-color="#3a372c" stop-opacity="0"/><stop offset=".68" stop-color="#3a372c" stop-opacity=".5"/><stop offset=".82" stop-color="#2f2d25" stop-opacity=".74"/><stop offset="1" stop-color="#2c2a22" stop-opacity=".8"/></linearGradient>
<linearGradient id="tor" x1="0" y1="0" x2="0" y2="1"><stop offset="0" stop-color="#a6c2b6"/><stop offset=".3" stop-color="#b4d0c4"/><stop offset=".7" stop-color="#a5b9aa"/><stop offset="1" stop-color="#8f937e"/></linearGradient>
<linearGradient id="torx" x1="0" y1="0" x2="1" y2="0"><stop offset="0" stop-color="#20241c" stop-opacity=".42"/><stop offset=".1" stop-color="#20241c" stop-opacity=".1"/><stop offset=".2" stop-color="#fff" stop-opacity=".08"/><stop offset=".6" stop-color="#20241c" stop-opacity=".0"/><stop offset=".85" stop-color="#20241c" stop-opacity=".3"/><stop offset="1" stop-color="#20241c" stop-opacity=".55"/></linearGradient>
<linearGradient id="rust" x1="0" y1="0" x2="1" y2="0"><stop offset="0" stop-color="#7e4028"/><stop offset=".22" stop-color="#a9603f"/><stop offset=".6" stop-color="#9c5436"/><stop offset="1" stop-color="#653220"/></linearGradient>
<linearGradient id="rusty" x1="0" y1="0" x2="0" y2="1"><stop offset="0" stop-color="#000" stop-opacity=".12"/><stop offset=".3" stop-color="#000" stop-opacity="0"/><stop offset="1" stop-color="#000" stop-opacity=".12"/></linearGradient>
<linearGradient id="pipe" x1="0" y1="0" x2="1" y2="0"><stop offset="0" stop-color="#74391f"/><stop offset=".45" stop-color="#9f5a38"/><stop offset="1" stop-color="#683220"/></linearGradient>
<linearGradient id="leg" x1="0" y1="0" x2="1" y2="0"><stop offset="0" stop-color="#66301c"/><stop offset=".4" stop-color="#94502f"/><stop offset="1" stop-color="#5a2a19"/></linearGradient>
<linearGradient id="pipev" x1="0" y1="0" x2="0" y2="1"><stop offset="0" stop-color="#b56a42"/><stop offset=".6" stop-color="#9a5232"/><stop offset="1" stop-color="#7a3c24"/></linearGradient>
<radialGradient id="foot" cx=".47" cy=".38" r=".66"><stop offset="0" stop-color="#eceee0"/><stop offset=".6" stop-color="#dfe3d2"/><stop offset=".88" stop-color="#bfbca0"/><stop offset="1" stop-color="#93805f"/></radialGradient>
<linearGradient id="arm" x1="0" y1="0" x2="1" y2="0"><stop offset="0" stop-color="#869c8f"/><stop offset=".3" stop-color="#bcd5c9"/><stop offset=".65" stop-color="#a0b9ad"/><stop offset="1" stop-color="#647467"/></linearGradient>
<filter id="spk" x="-5%" y="-5%" width="110%" height="110%" color-interpolation-filters="sRGB"><feTurbulence type="fractalNoise" baseFrequency="0.55" numOctaves="2" seed="7" result="n"/><feColorMatrix in="n" type="matrix" values="0 0 0 0 .36  0 0 0 0 .29  0 0 0 0 .22  4.5 0 0 0 -2.75" result="c"/><feTurbulence type="fractalNoise" baseFrequency="0.07" numOctaves="3" seed="21" result="n2"/><feColorMatrix in="n2" type="matrix" values="0 0 0 0 .42  0 0 0 0 .34  0 0 0 0 .25  2.2 0 0 0 -1.1" result="c2"/><feMerge result="m"><feMergeNode in="c2"/><feMergeNode in="c"/></feMerge><feComposite in="m" in2="SourceAlpha" operator="in" result="sp"/><feMerge><feMergeNode in="SourceGraphic"/><feMergeNode in="sp"/></feMerge></filter>
<filter id="spkl" x="-5%" y="-5%" width="110%" height="110%" color-interpolation-filters="sRGB"><feTurbulence type="fractalNoise" baseFrequency="0.4" numOctaves="3" seed="3" result="n"/><feColorMatrix in="n" type="matrix" values="0 0 0 0 .5  0 0 0 0 .4  0 0 0 0 .3  3 0 0 0 -1.85" result="c"/><feComposite in="c" in2="SourceAlpha" operator="in" result="sp"/><feMerge><feMergeNode in="SourceGraphic"/><feMergeNode in="sp"/></feMerge></filter>
<filter id="spk2" x="-5%" y="-5%" width="110%" height="110%" color-interpolation-filters="sRGB"><feTurbulence type="fractalNoise" baseFrequency="0.5" numOctaves="2" seed="11" result="n"/><feColorMatrix in="n" type="matrix" values="0 0 0 0 .36  0 0 0 0 .16  0 0 0 0 .09  3.4 0 0 0 -1.95" result="c"/><feTurbulence type="fractalNoise" baseFrequency="0.09" numOctaves="3" seed="4" result="n2"/><feColorMatrix in="n2" type="matrix" values="0 0 0 0 .8  0 0 0 0 .52  0 0 0 0 .36  2.2 0 0 0 -1.08" result="c2"/><feMerge result="m"><feMergeNode in="c2"/><feMergeNode in="c"/></feMerge><feComposite in="m" in2="SourceAlpha" operator="in" result="sp"/><feMerge><feMergeNode in="SourceGraphic"/><feMergeNode in="sp"/></feMerge></filter>
<filter id="grs" x="-10%" y="-10%" width="120%" height="120%" color-interpolation-filters="sRGB"><feTurbulence type="fractalNoise" baseFrequency="0.3" numOctaves="3" seed="5" result="n"/><feColorMatrix in="n" type="matrix" values="0 0 0 0 .5  0 0 0 0 .66  0 0 0 0 .4  3.2 0 0 0 -.95" result="c"/><feGaussianBlur in="SourceAlpha" stdDeviation="2" result="b"/><feComposite in="c" in2="b" operator="in" result="g"/><feGaussianBlur in="g" stdDeviation=".5"/></filter>
<filter id="bl1"><feGaussianBlur stdDeviation="1.6"/></filter>
<filter id="bl2"><feGaussianBlur stdDeviation="3"/></filter>
<filter id="soft"><feGaussianBlur stdDeviation=".4"/></filter>
</defs>
<g id="robot" filter="url(#soft)">
<!-- grass -->
<path d="M212 408 Q214 396 226 392 L250 388 Q262 384 274 387 L294 392 Q304 398 303.6 410 Q302 424 286 426 L262 423 L232 423.6 Q213 422 212 408 Z" fill="#7aa056" filter="url(#grs)"/>
<!-- legs -->
<g filter="url(#spk2)">
<path d="M232.3 340 Q231.6 349 235 354 Q237.6 358.6 238 366 L244.4 366 Q245 358.6 247.6 354 Q250.6 348 249.8 340 Z" fill="url(#leg)"/>
<path d="M272.7 340 Q272 350 275.4 356 Q277.4 360 277.4 376 L284.6 376 Q284.8 360 286.6 356 Q290.2 350 289.4 340 Z" fill="url(#leg)"/>
</g>
<g filter="url(#spkl)">
<path d="M233 364 Q236.6 361.6 240.2 364 L240.2 390 H233 Z" fill="#866a54"/>
<path d="M242 366 Q246.4 358 251 366 L251.2 391.6 H242 Z" fill="#bdbba4"/>
<path d="M272.7 364 Q275 362 277 364 V393.4 H272.7 Z" fill="#968f78"/>
<path d="M283.3 364 Q285.4 362 287.3 364 V393.4 H283.3 Z" fill="#a39c85"/>
</g>
<path d="M240.2 366 H242 V390 H240.2 Z" fill="#5a4434"/>
<!-- feet -->
<g filter="url(#spkl)"><ellipse cx="252" cy="394" rx="8" ry="8.6" fill="url(#foot)"/><ellipse cx="279" cy="396" rx="12" ry="8.4" fill="url(#foot)"/><ellipse cx="236.8" cy="406.2" rx="19.8" ry="16" fill="url(#foot)"/><ellipse cx="280.6" cy="409" rx="17.6" ry="16.7" fill="url(#foot)"/></g>
<!-- belt -->
<g filter="url(#spk2)">
<path d="M232.4 320 H289 L288.8 340 Q261 347.5 232.8 340 Z" fill="url(#rust)"/>
<path d="M226.8 307 H293.4 L293.2 319.8 Q260 326.4 227 319.8 Z" fill="url(#rust)"/>
<path d="M222 274 H299 L298.8 307 Q260 315 222.4 307 Z" fill="url(#rust)"/>
</g>
<path d="M232.8 340 Q261 347.5 288.8 340" fill="none" stroke="#3e1e12" stroke-width="1.6" opacity=".7"/>
<path d="M222.4 307 Q260 315 298.8 307" fill="none" stroke="#54281a" stroke-width="1" opacity=".75"/>
<path d="M227 319.8 Q260 326.4 293.2 319.8" fill="none" stroke="#54281a" stroke-width="1" opacity=".75"/>
<path d="M222.4 305.4 Q260 313.4 298.8 305.4" fill="none" stroke="#cf8a62" stroke-width=".7" opacity=".6"/>
<path d="M227 318.4 Q260 325 293.2 318.4" fill="none" stroke="#cf8a62" stroke-width=".7" opacity=".6"/>
<!-- shoulder pipes -->
<g filter="url(#spk2)">
<path d="M216 224.6 L204 223.6 Q194.8 224 194.8 233 L196 263 L204.2 263 L204 239 Q204.6 236.4 208 236.6 L216 237.4 Z" fill="url(#pipe)"/>
<path d="M305 225 L316 226.4 Q327.4 228.6 327.2 240 L325 266 L317.6 266 L317.8 244 Q317.6 240 313 239.4 L305 238.4 Z" fill="url(#pipe)"/>
</g>
<!-- forearms -->
<g filter="url(#spk)">
<path d="M188.9 277 L206.9 277 L205.8 324 Q192 328 178.7 323 Z" fill="url(#arm)"/>
<path d="M311 279 L329 279 L331.3 323 Q318 329.6 305.8 325 Z" fill="url(#arm)"/>
<path d="M187.8 264 Q199 259.6 210 264 L209 280 H188.6 Z" fill="#93a594"/>
<path d="M309 266 Q320 262 331 266 L330.4 282 H309.6 Z" fill="#93a594"/>
</g>
<!-- claws -->
<g fill="none" stroke="#8b4228" stroke-linecap="round" stroke-linejoin="round">
<path d="M184 325 L175.6 333.6 L178 342.6" stroke-width="4.4"/><path d="M178 342.6 L185.6 348.6" stroke-width="3.2"/>
<path d="M201 326 L204.8 334" stroke-width="4.2"/><path d="M204.8 334 L202.4 343.8" stroke-width="3"/>
<path d="M307.8 327 L305.8 336" stroke-width="4.2"/><path d="M305.8 336 L309.6 346.2" stroke-width="3"/>
<path d="M329.4 326 L333.6 338.6" stroke-width="4.4"/><path d="M333.6 338.6 L327 347.6 L319.4 352.6" stroke-width="3.4"/>
</g>
<!-- torso -->
<g filter="url(#spk)"><path d="M213.6 224 Q213.4 214 222 211.4 L298 211.4 Q307.6 213 307.6 224 Q307 250 300.4 286.4 Q280 279 260 275.6 Q238 275.6 217.6 281.6 Q213.6 250 213.6 224 Z" fill="url(#tor)"/></g>
<path d="M213.6 224 Q213.4 214 222 211.4 L298 211.4 Q307.6 213 307.6 224 Q307 250 300.4 286.4 Q280 279 260 275.6 Q238 275.6 217.6 281.6 Q213.6 250 213.6 224 Z" fill="url(#torx)"/>
<ellipse cx="262" cy="266" rx="16" ry="8" fill="#4e4636" opacity=".35" filter="url(#bl2)"/>
<ellipse cx="240" cy="243" rx="12" ry="7" fill="#5a4e3c" opacity=".22" filter="url(#bl2)"/>
<path d="M217.6 281.6 Q238 275.6 260 275.6 Q280 279 300.4 286.4" fill="none" stroke="#d3d8ca" stroke-width="1.8"/>
<path d="M217.8 283.2 Q238 277.2 260 277.2 Q280 280.6 300.2 288" fill="none" stroke="#3a3226" stroke-width="1.3" opacity=".8"/>
<!-- dome -->
<g filter="url(#spk)"><path d="M220.9 204 C220.2 176 236 158.4 261.4 158.4 C286.6 158.4 302.2 176 301.6 204 A40.35 24 0 0 1 220.9 204 Z" fill="url(#dome)"/></g>
<path d="M220.9 204 C220.2 176 236 158.4 261.4 158.4 C286.6 158.4 302.2 176 301.6 204 A40.35 24 0 0 1 220.9 204 Z" fill="url(#domesh)"/>
<ellipse cx="288" cy="200" rx="9" ry="12" fill="#4a4436" opacity=".35" filter="url(#bl2)"/>
<path d="M220.9 203.8 A40.35 24.2 0 0 0 301.6 203.8" fill="none" stroke="#38362c" stroke-width="3" opacity=".85"/>
<path d="M220.9 202.2 A40.35 23.6 0 0 0 301.6 202.2" fill="none" stroke="#a9af9e" stroke-width="1.2"/>
<!-- eyes -->
<g>
<circle cx="249.5" cy="215.8" r="7.5" fill="#3e3e35"/><circle cx="249.2" cy="215.5" r="6.6" fill="#b1b29f"/><circle cx="249.7" cy="216.2" r="4.9" fill="#2a2a25"/><circle cx="249.8" cy="216.3" r="2.8" fill="#54574f"/><circle cx="250.1" cy="216.6" r="1.8" fill="#1a1a17"/>
<circle cx="272" cy="216.8" r="7.5" fill="#3e3e35"/><circle cx="271.7" cy="216.5" r="6.6" fill="#b1b29f"/><circle cx="272.2" cy="217.2" r="4.9" fill="#2a2a25"/><circle cx="272.3" cy="217.3" r="2.8" fill="#54574f"/><circle cx="272.6" cy="217.6" r="1.8" fill="#1a1a17"/>
</g>
</g>
</svg>
<svg class="a" style="left:15.5px;top:85.4px" width="92" height="52.0" viewBox="139.4 112.7 634.6 357.6"><use href="#robot"/></svg>
<svg class="a" style="left:15.5px;top:146.6px" width="92" height="52.0" viewBox="139.4 112.7 634.6 357.6"><use href="#robot"/></svg>
<svg class="a" style="left:873.6px;top:374.8px;filter:brightness(.78) saturate(1.15)" width="14" height="19.2" viewBox="170 152 170 280" preserveAspectRatio="none"><use href="#robot"/></svg>
<svg class="a" style="left:77.5px;top:44px" width="74.1" height="38.2" viewBox="0 0 74.1 38.2"><rect x="1.8" y="1.8" width="70.5" height="34.6" fill="none" stroke="#f4000c" stroke-width="3.6"/></svg>
<svg class="a" style="left:120.5px;top:23.6px" width="50.5" height="23.9" viewBox="0 0 50.5 23.9"><rect x="1.8" y="1.8" width="46.9" height="20.299999999999997" fill="none" stroke="#f4000c" stroke-width="3.6"/></svg>
</div></body></html>
